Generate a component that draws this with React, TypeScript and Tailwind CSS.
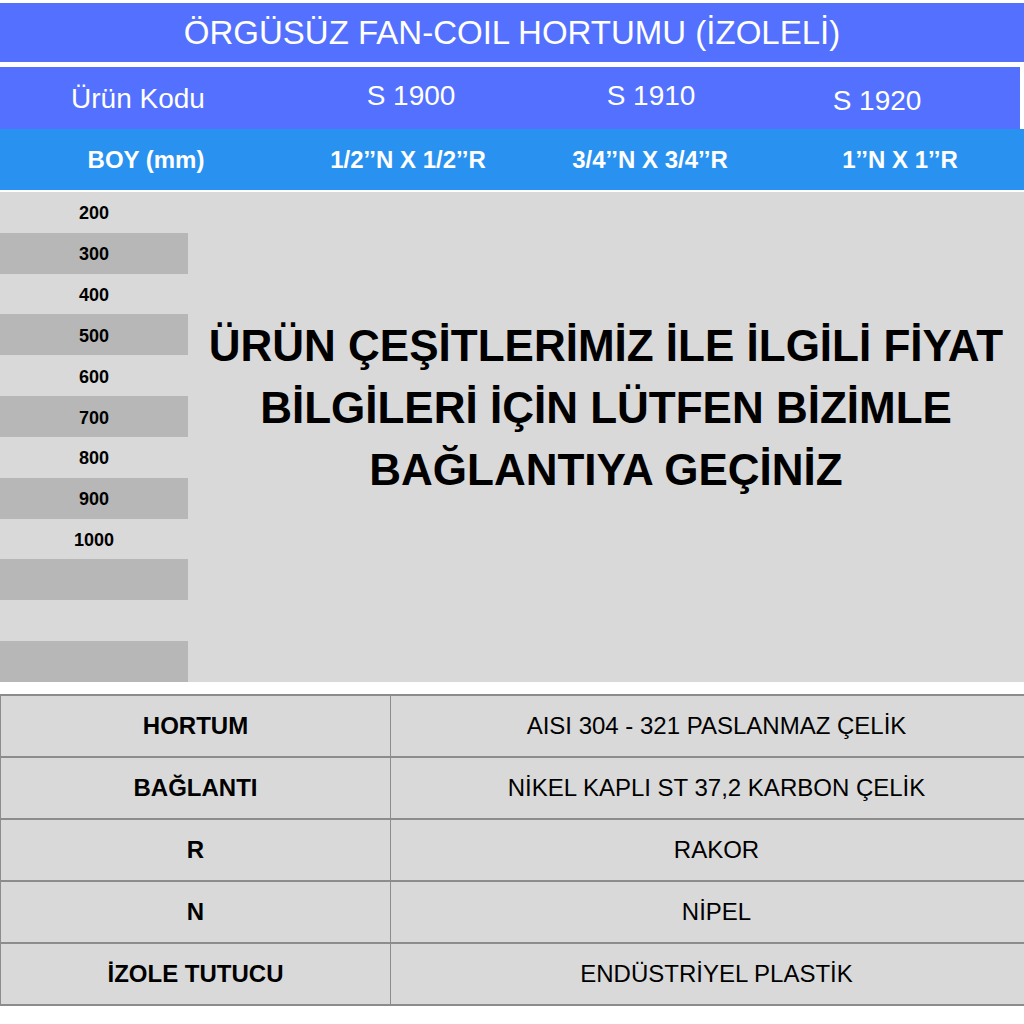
import React from "react";

const lengths = ["200", "300", "400", "500", "600", "700", "800", "900", "1000", "", "", ""];

const specs: [string, string][] = [
  ["HORTUM", "AISI 304 - 321 PASLANMAZ ÇELİK"],
  ["BAĞLANTI", "NİKEL KAPLI ST 37,2 KARBON ÇELİK"],
  ["R", "RAKOR"],
  ["N", "NİPEL"],
  ["İZOLE TUTUCU", "ENDÜSTRİYEL PLASTİK"],
];

export default function App() {
  return (
    <div
      className="w-[1024px] h-[1024px] bg-white flex flex-col overflow-hidden"
      style={{ fontFamily: '"Liberation Sans", Arial, sans-serif' }}
    >
      <div className="h-[3px]" />
      <div className="h-[59px] bg-[#5371fe] flex items-center justify-center text-white text-[33px] leading-none">
        ÖRGÜSÜZ FAN-COIL HORTUMU (İZOLELİ)
      </div>
      <div className="h-[5px]" />
      <div className="flex h-[62px]">
        <div className="w-[1020px] bg-[#5371fe] flex items-center text-white text-[28px] leading-none">
          <div className="w-[276px] text-center pt-[2px]">Ürün Kodu</div>
          <div className="w-[270px] text-center pb-[4px]">S 1900</div>
          <div className="w-[210px] text-center pb-[4px]">S 1910</div>
          <div className="w-[242px] text-center pt-[6px]">S 1920</div>
        </div>
      </div>
      <div className="h-[61px] bg-[#2992f0] flex items-center text-white font-bold text-[24px] leading-none">
        <div className="w-[292px] text-center">BOY (mm)</div>
        <div className="w-[232px] text-center">1/2’’N X 1/2’’R</div>
        <div className="w-[252px] text-center">3/4’’N X 3/4’’R</div>
        <div className="w-[248px] text-center">1’’N X 1’’R</div>
      </div>
      <div className="h-[2px]" />
      <div className="h-[490px] bg-[#d9d9d9] flex">
        <div className="w-[188px] flex flex-col">
          {lengths.map((l, i) => (
            <div
              key={i}
              className={
                "flex-1 flex items-center justify-center pt-[3px] font-bold text-[18px] text-black " +
                (i % 2 === 1 ? "bg-[#b7b7b7]" : "")
              }
            >
              {l}
            </div>
          ))}
        </div>
        <div className="flex-1 flex items-center justify-center pb-[58px]">
          <p className="text-center font-bold text-[44px] leading-[62px] text-black">
            ÜRÜN ÇEŞİTLERİMİZ İLE İLGİLİ FİYAT
            <br />
            BİLGİLERİ İÇİN LÜTFEN BİZİMLE
            <br />
            BAĞLANTIYA GEÇİNİZ
          </p>
        </div>
      </div>
      <div className="h-[12px]" />
      <div className="border-t-2 border-[#8c8c8c] border-l border-l-[#8c8c8c] bg-[#d9d9d9]">
        {specs.map(([k, v]) => (
          <div key={k} className="flex h-[62px] border-b-2 border-[#8c8c8c] text-[24px] text-black">
            <div className="w-[390px] flex items-center justify-center font-bold border-r border-[#8c8c8c]">{k}</div>
            <div className="flex-1 flex items-center justify-center pl-[18px]">{v}</div>
          </div>
        ))}
      </div>
    </div>
  );
}
